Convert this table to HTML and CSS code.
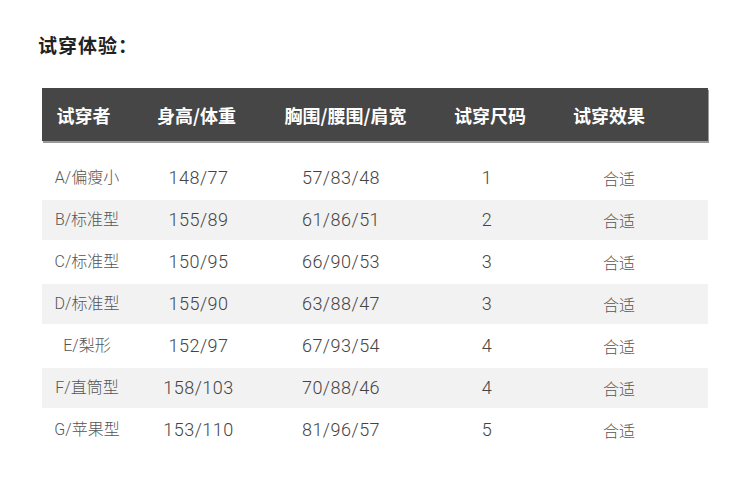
FILE: index.html
```html
<!DOCTYPE html>
<html lang="zh-CN">
<head>
<meta charset="utf-8">
<title>试穿体验</title>
<link rel="stylesheet" href="styles.css">
</head>
<body>
<div class="page">
  <h2 class="title">试穿体验：</h2>
  <div class="table">
    <div class="thead">
      <div class="th">试穿者</div>
      <div class="th">身高/体重</div>
      <div class="th">胸围/腰围/肩宽</div>
      <div class="th">试穿尺码</div>
      <div class="th">试穿效果</div>
      <div class="th"></div>
    </div>
    <div class="tbody">
      <div class="tr">
        <div class="td name">A/偏瘦小</div><div class="td num">148/77</div><div class="td num">57/83/48</div><div class="td num">1</div><div class="td fit">合适</div><div class="td"></div>
      </div>
      <div class="tr alt">
        <div class="td name">B/标准型</div><div class="td num">155/89</div><div class="td num">61/86/51</div><div class="td num">2</div><div class="td fit">合适</div><div class="td"></div>
      </div>
      <div class="tr">
        <div class="td name">C/标准型</div><div class="td num">150/95</div><div class="td num">66/90/53</div><div class="td num">3</div><div class="td fit">合适</div><div class="td"></div>
      </div>
      <div class="tr alt">
        <div class="td name">D/标准型</div><div class="td num">155/90</div><div class="td num">63/88/47</div><div class="td num">3</div><div class="td fit">合适</div><div class="td"></div>
      </div>
      <div class="tr">
        <div class="td name">E/梨形</div><div class="td num">152/97</div><div class="td num">67/93/54</div><div class="td num">4</div><div class="td fit">合适</div><div class="td"></div>
      </div>
      <div class="tr alt">
        <div class="td name">F/直筒型</div><div class="td num">158/103</div><div class="td num">70/88/46</div><div class="td num">4</div><div class="td fit">合适</div><div class="td"></div>
      </div>
      <div class="tr">
        <div class="td name">G/苹果型</div><div class="td num">153/110</div><div class="td num">81/96/57</div><div class="td num">5</div><div class="td fit">合适</div><div class="td"></div>
      </div>
    </div>
  </div>
</div>
</body>
</html>
```
FILE: styles.css
```css
html, body {
  margin: 0;
  padding: 0;
  background: #ffffff;
}

.page {
  width: 750px;
  padding-top: 33px;
  font-family: Roboto, "Noto Sans CJK SC", sans-serif;
}

.title {
  margin: 0 0 0 38px;
  font-family: "Noto Sans CJK SC", sans-serif;
  font-size: 19px;
  line-height: 24px;
  font-weight: 700;
  color: #222222;
  letter-spacing: 1px;
}

.table {
  width: 666px;
  margin: 31px 0 0 42px;
}

.thead {
  display: grid;
  grid-template-columns: 83px 143px 155px 134px 104px 47px;
  height: 53px;
  align-items: center;
  background: #464646;
  box-shadow: 1px 2px 0 #9a9a9a;
}

.th {
  text-align: center;
  color: #ffffff;
  font-family: "Noto Sans CJK SC", sans-serif;
  font-size: 18px;
  font-weight: 700;
  line-height: 24px;
}

.tbody {
  margin-top: 15px;
}

.tr {
  display: grid;
  grid-template-columns: 90px 133px 152px 140px 124px 27px;
  height: 44px;
  align-items: center;
  color: #4a4a4a;
}

.tr.alt {
  height: 40px;
  background: #f2f2f2;
}

.td {
  text-align: center;
  line-height: 22px;
}

.name {
  font-size: 16px;
  font-weight: 300;
  color: #555555;
}

.num {
  font-size: 18px;
  font-weight: 300;
  letter-spacing: 0.5px;
  color: #444444;
}

.fit {
  font-family: "Noto Sans CJK SC", sans-serif;
  font-size: 16px;
  font-weight: 300;
  color: #555555;
}
```
